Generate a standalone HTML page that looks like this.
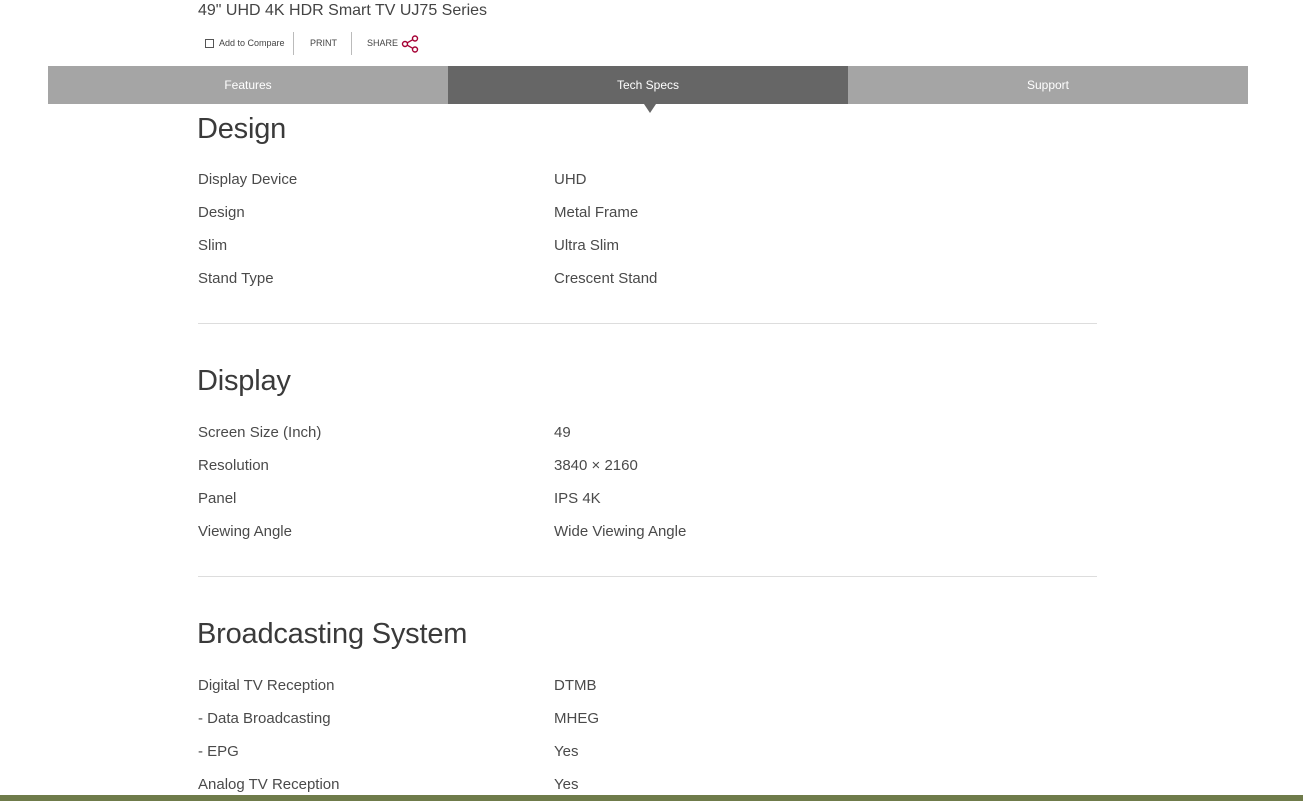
<!DOCTYPE html>
<html><head><meta charset="utf-8"><style>
*{margin:0;padding:0;box-sizing:border-box}
body{width:1303px;height:801px;overflow:hidden;background:#fff;font-family:"Liberation Sans",sans-serif;color:#333;position:relative}
.t{position:absolute;white-space:nowrap}
.title{left:198px;top:2px;font-size:16px;color:#444}
.tabs{position:absolute;left:48px;top:66px;width:1200px;height:38px;display:flex}
.tab{flex:1;background:#a5a5a5;color:#fff;font-size:12px;text-align:center;line-height:38px}
.tab.on{background:#666;position:relative}
.tab.on:after{content:"";position:absolute;left:196px;top:38px;border-left:6px solid transparent;border-right:6px solid transparent;border-top:9px solid #666}
h2{position:absolute;left:197px;font-size:29px;font-weight:normal;color:#3a3a3a;letter-spacing:-0.2px}
.l,.v{position:absolute;font-size:15px;color:#4a4a4a}
.l{left:198px}.v{left:554px}
.hr{position:absolute;left:198px;width:899px;height:1px;background:#ddd}
.bot{position:absolute;left:0;top:795px;width:1303px;height:6px;background:#6f7b4a}
</style></head><body>
<div class="t title">49" UHD 4K HDR Smart TV UJ75 Series</div>
<div class="t" style="left:205px;top:39px;width:9px;height:9px;border:1px solid #555"></div>
<div class="t" style="left:219px;top:38px;font-size:9px;color:#444">Add to Compare</div>
<div class="t" style="left:293px;top:32px;width:1px;height:23px;background:#bbb"></div>
<div class="t" style="left:310px;top:38px;font-size:9px;color:#444">PRINT</div>
<div class="t" style="left:351px;top:32px;width:1px;height:23px;background:#bbb"></div>
<div class="t" style="left:367px;top:38px;font-size:9px;color:#444">SHARE</div>
<svg class="t" style="left:400px;top:34px" width="20" height="20" viewBox="0 0 20 20"><g fill="none" stroke="#a50034" stroke-width="1.4"><circle cx="5" cy="10" r="2.5"/><circle cx="15" cy="4.5" r="2.5"/><circle cx="15" cy="15.5" r="2.5"/><path d="M7.2 8.8L12.8 5.7M7.2 11.2L12.8 14.3"/></g></svg>
<div class="tabs"><div class="tab">Features</div><div class="tab on">Tech Specs</div><div class="tab">Support</div></div>

<h2 style="top:113px">Design</h2>
<div class="l" style="top:171px">Display Device</div><div class="v" style="top:171px">UHD</div>
<div class="l" style="top:204px">Design</div><div class="v" style="top:204px">Metal Frame</div>
<div class="l" style="top:237px">Slim</div><div class="v" style="top:237px">Ultra Slim</div>
<div class="l" style="top:270px">Stand Type</div><div class="v" style="top:270px">Crescent Stand</div>
<div class="hr" style="top:323px"></div>

<h2 style="top:365px">Display</h2>
<div class="l" style="top:424px">Screen Size (Inch)</div><div class="v" style="top:424px">49</div>
<div class="l" style="top:457px">Resolution</div><div class="v" style="top:457px">3840 × 2160</div>
<div class="l" style="top:490px">Panel</div><div class="v" style="top:490px">IPS 4K</div>
<div class="l" style="top:523px">Viewing Angle</div><div class="v" style="top:523px">Wide Viewing Angle</div>
<div class="hr" style="top:576px"></div>

<h2 style="top:618px">Broadcasting System</h2>
<div class="l" style="top:677px">Digital TV Reception</div><div class="v" style="top:677px">DTMB</div>
<div class="l" style="top:710px">- Data Broadcasting</div><div class="v" style="top:710px">MHEG</div>
<div class="l" style="top:743px">- EPG</div><div class="v" style="top:743px">Yes</div>
<div class="l" style="top:776px">Analog TV Reception</div><div class="v" style="top:776px">Yes</div>
<div class="bot"></div>
</body></html>
